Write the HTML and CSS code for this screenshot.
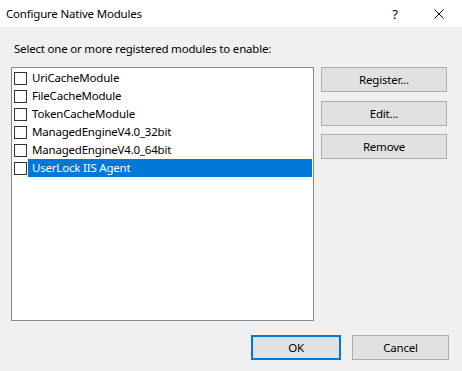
FILE: index.html
```html
<!DOCTYPE html>
<html lang="en">
<head>
    <meta charset="UTF-8">
    <meta name="viewport" content="width=device-width, initial-scale=1.0">
    <title>Configure Native Modules</title>
    <link rel="stylesheet" href="styles.css">
</head>
<body>
    <div class="dialog">
        <div class="titlebar">
            <span class="title">Configure Native Modules</span>
            <span class="caption-btn help">?</span>
            <span class="caption-btn close">
                <svg width="10" height="10" viewBox="0 0 10 10">
                    <path d="M0.5 0.5 L9.5 9.5 M9.5 0.5 L0.5 9.5" stroke="#000" stroke-width="1" fill="none"/>
                </svg>
            </span>
        </div>

        <div class="content">
            <p class="prompt">Select one or more registered modules to enable:</p>

            <div class="main">
                <div class="list">
                    <div class="item"><span class="check"></span><span class="name">UriCacheModule</span></div>
                    <div class="item"><span class="check"></span><span class="name">FileCacheModule</span></div>
                    <div class="item"><span class="check"></span><span class="name">TokenCacheModule</span></div>
                    <div class="item"><span class="check"></span><span class="name">ManagedEngineV4.0_32bit</span></div>
                    <div class="item"><span class="check"></span><span class="name">ManagedEngineV4.0_64bit</span></div>
                    <div class="item selected"><span class="check"></span><span class="name">UserLock IIS Agent</span></div>
                </div>

                <div class="side">
                    <button class="btn side-btn">Register...</button>
                    <button class="btn side-btn">Edit...</button>
                    <button class="btn side-btn">Remove</button>
                </div>
            </div>

            <div class="footer">
                <button class="btn ok">OK</button>
                <button class="btn cancel">Cancel</button>
            </div>
        </div>
    </div>
</body>
</html>
```

FILE: styles.css
```css
html, body {
    margin: 0;
    padding: 0;
}
body {
    width: 462px;
    height: 371px;
    background-color: #f0f0f0;
    font-family: "Noto Sans", "Open Sans", sans-serif;
    font-size: 11.5px;
    letter-spacing: -0.2px;
    color: #000;
    overflow: hidden;
}
.titlebar {
    height: 27px;
    background: #fff;
    display: flex;
    align-items: center;
}
.title {
    flex: 1;
    padding-left: 6px;
    line-height: 16px;
}
.caption-btn {
    width: 46px;
    height: 27px;
    display: flex;
    align-items: center;
    justify-content: center;
}
.help {
    font-size: 13px;
    padding-left: 4px;
    box-sizing: border-box;
}
.close svg {
    display: block;
}
.content {
    padding: 0 0 0 11px;
}
.prompt {
    margin: 14px 0 10px 3px;
    line-height: 16px;
}
.main {
    display: flex;
    align-items: flex-start;
}
.list {
    width: 303px;
    height: 254px;
    box-sizing: border-box;
    border: 1px solid #828790;
    background: #fff;
    padding-top: 1px;
}
.item {
    height: 18px;
    display: flex;
    align-items: center;
    line-height: 18px;
}
.check {
    width: 13px;
    height: 13px;
    box-sizing: border-box;
    border: 1px solid #333;
    background: #fff;
    margin-left: 2px;
    flex-shrink: 0;
}
.name {
    flex: 1;
    margin: 0 1px;
    padding-left: 4px;
    height: 18px;
}
.selected .name {
    background: #0078d7;
    color: #fff;
}
.side {
    display: flex;
    flex-direction: column;
    margin-left: 7px;
}
.btn {
    font-family: inherit;
    font-size: 11.5px;
    letter-spacing: -0.2px;
    color: #000;
    background: #e1e1e1;
    border: 1px solid #adadad;
    border-radius: 0;
    padding: 0;
    margin: 0;
    box-sizing: border-box;
    height: 25px;
    line-height: 16px;
}
.side-btn {
    width: 126px;
}
.side-btn + .side-btn {
    margin-top: 9px;
}
.side-btn:last-child {
    margin-top: 8px;
}
.footer {
    display: flex;
    gap: 11px;
    margin-top: 14px;
    padding-left: 240px;
}
.ok {
    width: 90px;
    border: 2px solid #0078d7;
}
.cancel {
    width: 97px;
}
```
